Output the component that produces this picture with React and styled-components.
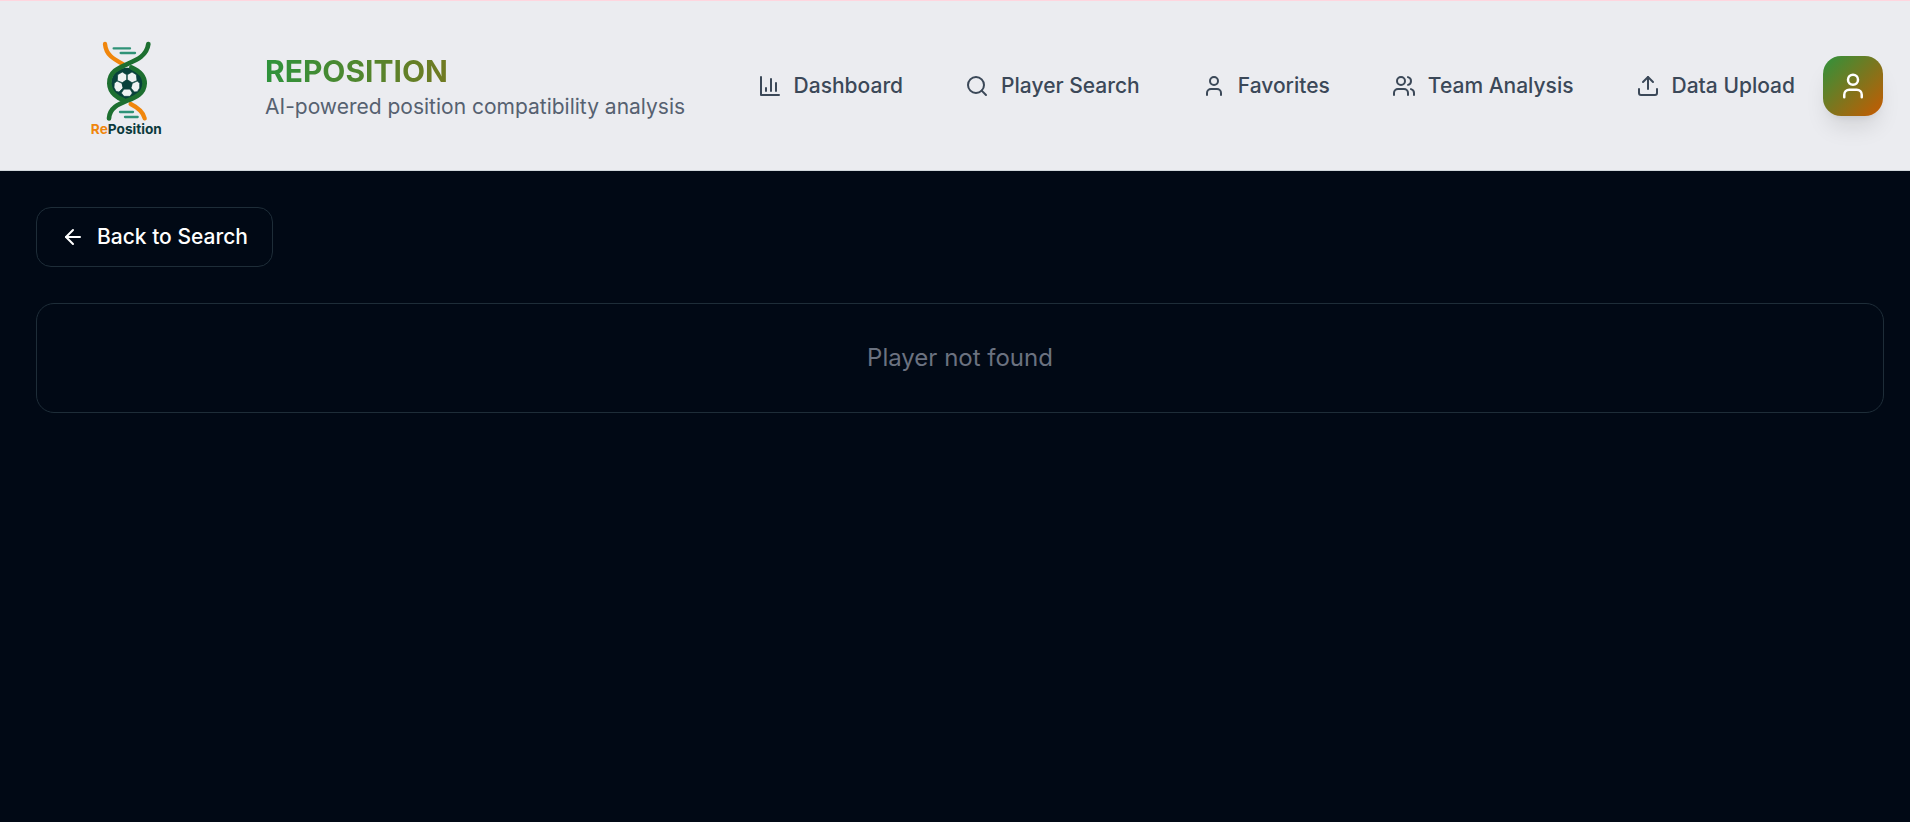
import React from 'react';
import styled, { createGlobalStyle } from 'styled-components';
import { ArrowLeft, Search, Upload, User, Users } from 'lucide-react';

const GlobalStyle = createGlobalStyle`
  *, *::before, *::after { box-sizing: border-box; }
  body {
    margin: 0;
    background: #010915;
    color: #f8fafc;
    font-family: Inter, "Liberation Sans", sans-serif;
  }
`;

const Header = styled.header`
  display: flex;
  align-items: center;
  min-height: 171px;
  padding: 0 27px 0 36px;
  background: #ebecf0;
  border-top: 1px solid #ffd6df;
  border-bottom: 1px solid #cfd6da;
`;

const Brand = styled.a`
  display: flex;
  align-items: center;
  gap: 52px;
  margin-right: auto;
  color: inherit;
  text-decoration: none;
`;

const LogoFrame = styled.span`
  display: flex;
  justify-content: center;
  width: 177px;
  padding-top: 4px;
`;

const BrandText = styled.span`
  display: flex;
  flex-direction: column;
`;

const BrandName = styled.span`
  font-size: 30px;
  line-height: 42px;
  font-weight: 700;
  color: transparent;
  background: linear-gradient(90deg, #2e933c, #c85a00);
  background-clip: text;
  -webkit-background-clip: text;
`;

const Tagline = styled.span`
  font-size: 21px;
  line-height: 30px;
  color: #566170;
  white-space: nowrap;
`;

const Nav = styled.nav`
  display: flex;
  align-items: center;
  gap: 62px;
  margin-right: 28px;
`;

const NavLink = styled.a`
  display: flex;
  align-items: center;
  gap: 12px;
  font-size: 21px;
  line-height: 30px;
  font-weight: 500;
  color: #3b4858;
  text-decoration: none;
  white-space: nowrap;
`;

const ProfileButton = styled.button`
  display: flex;
  align-items: center;
  justify-content: center;
  width: 60px;
  height: 60px;
  padding: 0;
  border: 0;
  border-radius: 18px;
  color: #ffffff;
  background: linear-gradient(135deg, #2e933c, #c85a00);
  box-shadow: 0 15px 22px -4px rgba(0, 0, 0, 0.1), 0 6px 9px -6px rgba(0, 0, 0, 0.1);
  cursor: pointer;
`;

const Main = styled.main`
  display: flex;
  flex-direction: column;
  align-items: flex-start;
  gap: 36px;
  padding: 36px 26px 36px 36px;
`;

const BackButton = styled.button`
  display: flex;
  align-items: center;
  gap: 12px;
  height: 60px;
  padding: 0 24px;
  border: 1px solid #1e2d38;
  border-radius: 15px;
  background: transparent;
  color: #ffffff;
  font-family: inherit;
  font-size: 21px;
  line-height: 30px;
  font-weight: 500;
  cursor: pointer;
`;

const Card = styled.section`
  align-self: stretch;
  padding: 36px;
  border: 1px solid #1e2d38;
  border-radius: 18px;
  text-align: center;
`;

const Message = styled.p`
  margin: 0;
  font-size: 24px;
  line-height: 36px;
  color: #6b7280;
`;

function Logo() {
  return (
    <svg width="110" height="115" viewBox="0 0 330 345" role="img" aria-label="RePosition logo">
      <g fill="none" strokeLinecap="round">
        <path d="M105 42C108 74 128 86 160 103" stroke="#f0860c" strokeWidth="13" />
        <path d="M182 222C206 234 220 246 224 265" stroke="#f0860c" strokeWidth="13" />
        <g stroke="#2f9277" strokeWidth="7">
          <path d="M131 55h49M152 69h43M150 246h39M165 261h38" />
        </g>
        <circle cx="171" cy="161" r="48" fill="#08413b" />
        <path d="M235 42C226 112 116 92 118 160C119 190 145 205 160 210" stroke="#1d6f30" strokeWidth="14" />
        <path d="M184 112C207 122 224 138 224 160C222 222 121 202 117 265" stroke="#1d6f30" strokeWidth="14" />
      </g>
      <g fill="#eef2f2" stroke="#08413b" strokeWidth="2">
        <path d="M143 134l14-8 13 8v15l-13 9-15-6z" />
        <path d="M172 134l14-8 13 8 2 18-15 6-14-9z" />
        <path d="M133 160l8-7 15 7 3 14-12 12-9-2-6-12z" />
        <path d="M187 160l15-7 7 7v14l-7 11-9 1-10-12z" />
        <path d="M162 177h18l7 12-7 10h-18l-8-10z" />
      </g>
      <path d="M171 149l16 11-6 18h-20l-6-18z" fill="#08413b" />
      <text x="169" y="312" textAnchor="middle" fontFamily="Inter, sans-serif" fontSize="41" fontWeight="700" fill="#0b3a3c">
        <tspan fill="#f0860c">Re</tspan>Position
      </text>
    </svg>
  );
}

function ChartIcon() {
  return (
    <svg width="24" height="24" viewBox="0 0 24 24" fill="none" stroke="currentColor" strokeWidth="2" strokeLinecap="round" strokeLinejoin="round" aria-hidden="true">
      <path d="M3 3v18h18M8 17v-3M13 17V5M18 17V9" />
    </svg>
  );
}

const links = [
  { label: 'Dashboard', Icon: ChartIcon },
  { label: 'Player Search', Icon: Search },
  { label: 'Favorites', Icon: User },
  { label: 'Team Analysis', Icon: Users },
  { label: 'Data Upload', Icon: Upload },
];

export default function App() {
  return (
    <>
      <GlobalStyle />
      <Header>
        <Brand href="#">
          <LogoFrame><Logo /></LogoFrame>
          <BrandText>
            <BrandName>REPOSITION</BrandName>
            <Tagline>AI-powered position compatibility analysis</Tagline>
          </BrandText>
        </Brand>
        <Nav aria-label="Main">
          {links.map(({ label, Icon }) => (
            <NavLink href="#" key={label}>
              <Icon size={24} />
              {label}
            </NavLink>
          ))}
        </Nav>
        <ProfileButton type="button" aria-label="Profile">
          <User size={30} />
        </ProfileButton>
      </Header>
      <Main>
        <BackButton type="button">
          <ArrowLeft size={24} />
          Back to Search
        </BackButton>
        <Card>
          <Message>Player not found</Message>
        </Card>
      </Main>
    </>
  );
}
